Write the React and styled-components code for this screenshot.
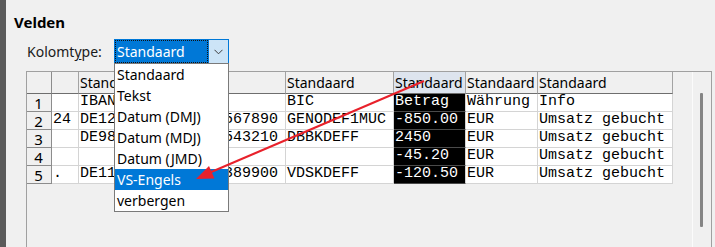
import React from 'react'
import styled, { createGlobalStyle } from 'styled-components'

const columns = [
  { key: 'rn', width: 25 },
  { key: 'a', width: 27, header: '' },
  { key: 'b', width: 207, header: 'Standaard' },
  { key: 'c', width: 108, header: 'Standaard' },
  { key: 'd', width: 72, header: 'Standaard', selected: true },
  { key: 'e', width: 72, header: 'Standaard' },
  { key: 'f', width: 135, header: 'Standaard' },
]

const rows = [
  ['', 'IBAN', 'BIC', 'Betrag', 'Währung', 'Info'],
  ['24', 'DE12345678901234567890', 'GENODEF1MUC', '-850.00', 'EUR', 'Umsatz gebucht'],
  ['', 'DE98765432109876543210', 'DBBKDEFF', '2450', 'EUR', 'Umsatz gebucht'],
  ['', '', '', '-45.20', 'EUR', 'Umsatz gebucht'],
  ['.', 'DE11500105170648389900', 'VDSKDEFF', '-120.50', 'EUR', 'Umsatz gebucht'],
]

const options = ['Standaard', 'Tekst', 'Datum (DMJ)', 'Datum (MDJ)', 'Datum (JMD)', 'VS-Engels', 'verbergen']

export default function App() {
  return (
    <Window>
      <GlobalStyle />
      <LeftStrip />
      <Main>
        <Title>Velden</Title>
        <TypeRow>
          <Label>Kolomt<Mnemonic>y</Mnemonic>pe:</Label>
          <Combo>
            <ComboValue><FocusRect>Standaard</FocusRect></ComboValue>
            <ComboButton>
              <svg width="9" height="6" viewBox="0 0 9 6">
                <path d="M0.5 0.8 L4.5 4.8 L8.5 0.8" fill="none" stroke="#3c3c3c" strokeWidth="1" />
              </svg>
            </ComboButton>
            <DropList>
              {options.map((o) => (
                <Option key={o} $active={o === 'VS-Engels'}>{o}</Option>
              ))}
            </DropList>
          </Combo>
        </TypeRow>
        <Panel>
          <Grid $cols={columns.map((c) => c.width + 'px').join(' ')}>
            {columns.map((c) => (
              <HeadCell key={'h' + c.key} $selected={c.selected} $corner={c.key === 'rn'}>
                {c.header}
              </HeadCell>
            ))}
            {rows.map((r, i) => (
              <React.Fragment key={'r' + i}>
                <RowNum>{i + 1}</RowNum>
                {r.map((v, j) => (
                  <Cell key={j} $selected={columns[j + 1].selected}>{v}</Cell>
                ))}
              </React.Fragment>
            ))}
          </Grid>
          <Filler />
          <ScrollTrack>
            <Thumb />
          </ScrollTrack>
        </Panel>
      </Main>
      <Arrow width="715" height="247" viewBox="0 0 715 247">
        <line x1="424" y1="81" x2="210" y2="172.5" stroke="#e8212b" strokeWidth="2" />
        <polygon points="196,179 214.5,178.5 209,166" fill="#e8212b" />
      </Arrow>
    </Window>
  )
}

////////////////////////////////////////////////////
// Styles
////////////////////////////////////////////////////

const GlobalStyle = createGlobalStyle`
  html, body {
    margin: 0;
    padding: 0;
    background: #f0f0f0;
  }
  body {
    font-family: "Noto Sans", "Open Sans", sans-serif;
    color: #000;
  }
`

const Window = styled.div`
  position: relative;
  display: flex;
  width: 715px;
  height: 247px;
  overflow: hidden;
  background: #f0f0f0;
`

const LeftStrip = styled.div`
  width: 6px;
  flex: none;
  background: #5b5b5b;
`

const Main = styled.div`
  flex: 1;
  display: flex;
  flex-direction: column;
  padding: 12px 0 0 8px;
`

const Title = styled.div`
  font-size: 15px;
  font-weight: 700;
  line-height: 20px;
  height: 20px;
`

const TypeRow = styled.div`
  display: flex;
  align-items: center;
  height: 25px;
  margin-top: 7px;
  padding-left: 13px;
  position: relative;
  z-index: 2;
`

const Label = styled.div`
  width: 87px;
  font-size: 14px;
  color: #1a1a1a;
`

const Mnemonic = styled.span`
  text-decoration: underline;
  text-underline-offset: 2px;
`

const Combo = styled.div`
  position: relative;
  display: flex;
  width: 115px;
  height: 25px;
  box-sizing: border-box;
  border: 1px solid #0078d7;
  background: #fff;
`

const ComboValue = styled.div`
  flex: 1;
  display: flex;
  background: #0078d7;
`

const FocusRect = styled.div`
  flex: 1;
  border: 1px dotted #111;
  color: #fff;
  font-size: 14px;
  line-height: 21px;
  padding-left: 1px;
`

const ComboButton = styled.div`
  width: 19px;
  display: flex;
  align-items: center;
  justify-content: center;
  background: #cce4f7;
  border-left: 1px solid #0078d7;
`

const DropList = styled.div`
  position: absolute;
  top: 100%;
  left: -1px;
  width: 115px;
  box-sizing: border-box;
  border: 1px solid #7a7a7a;
  background: #fff;
`

const Option = styled.div`
  height: 21px;
  line-height: 21px;
  padding-left: 2px;
  font-size: 14px;
  white-space: nowrap;
  background: ${(p) => (p.$active ? '#0078d7' : '#fff')};
  color: ${(p) => (p.$active ? '#fff' : '#000')};
`

const Panel = styled.div`
  flex: 1;
  display: flex;
  width: 686px;
  margin: 7px 0 0 12px;
  box-sizing: border-box;
  border: 1px solid #a0a0a0;
  border-bottom: none;
  background: #f0f0f0;
`

const Grid = styled.div`
  display: grid;
  grid-template-columns: ${(p) => p.$cols};
  grid-template-rows: 22px repeat(5, 18px);
  align-self: flex-start;
`

const HeadCell = styled.div`
  box-sizing: border-box;
  overflow: hidden;
  white-space: nowrap;
  padding-left: 1px;
  font-size: 14px;
  line-height: 21px;
  background: ${(p) => (p.$selected ? '#dde4ee' : '#f0f0f0')};
  border-right: 1px solid ${(p) => (p.$corner ? '#8c8c8c' : '#a3a3a3')};
  border-bottom: 1px solid #6e6e6e;
`

const RowNum = styled.div`
  box-sizing: border-box;
  text-align: center;
  font-size: 15px;
  line-height: 18px;
  padding-right: 1px;
  background: #f0f0f0;
  border-right: 1px solid #8c8c8c;
  border-bottom: 1px solid #8c8c8c;
  overflow: hidden;
`

const Cell = styled.div`
  box-sizing: border-box;
  overflow: hidden;
  white-space: nowrap;
  padding-left: 1px;
  font-family: "Liberation Mono", "DejaVu Sans Mono", monospace;
  font-size: 15px;
  line-height: 15px;
  background: ${(p) => (p.$selected ? '#000' : '#fff')};
  color: ${(p) => (p.$selected ? '#fff' : '#000')};
  border-right: 1px solid #d4d4d4;
  border-bottom: 1px solid ${(p) => (p.$selected ? '#4a4a4a' : '#d4d4d4')};
`

const Filler = styled.div`
  flex: 1;
`

const ScrollTrack = styled.div`
  width: 19px;
  flex: none;
  border-left: 1px solid #fbfbfb;
  padding: 21px 0 0 7px;
  box-sizing: border-box;
`

const Thumb = styled.div`
  width: 3px;
  height: 134px;
  border-radius: 1px;
  background: #858585;
`

const Arrow = styled.svg`
  position: absolute;
  left: 0;
  top: 0;
  pointer-events: none;
  z-index: 5;
`
